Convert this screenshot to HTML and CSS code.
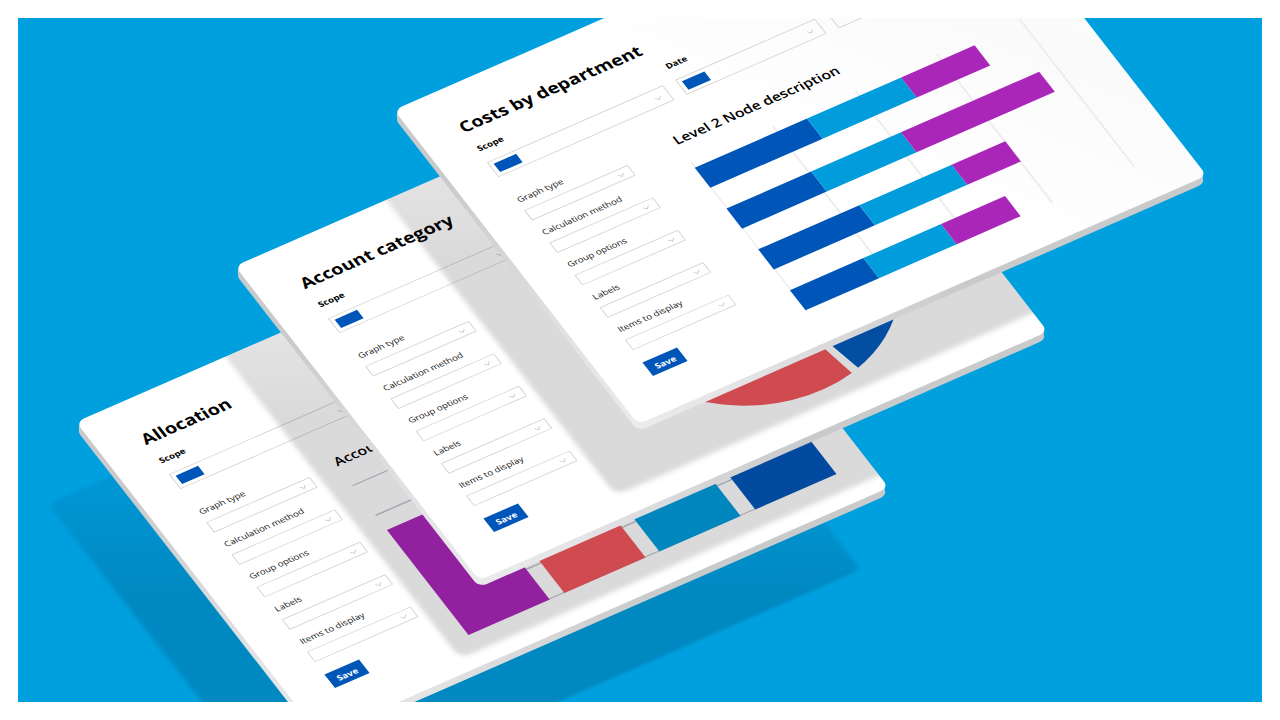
FILE: index.html
```html
<!DOCTYPE html>
<html lang="en">
<head>
    <meta charset="UTF-8">
    <meta name="viewport" content="width=device-width, initial-scale=1.0">
    <title>Reports</title>
    <link rel="stylesheet" href="styles.css">
</head>
<body>
    <main class="scene">
        <div class="ground"></div>

        <section class="board board-back">
            <div class="face">
                <h1>Allocation</h1>
                <div class="filters">
                    <div class="filter">
                        <label for="scope3">Scope</label>
                        <div class="select big"><select id="scope3"></select><span class="chip"></span></div>
                    </div>
                </div>
                <div class="content">
                    <form>
                        <label for="type3">Graph type</label>
                        <div class="select"><select id="type3"></select></div>
                        <label for="method3">Calculation method</label>
                        <div class="select"><select id="method3"></select></div>
                        <label for="group3">Group options</label>
                        <div class="select"><select id="group3"></select></div>
                        <label for="labels3">Labels</label>
                        <div class="select"><select id="labels3"></select></div>
                        <label for="items3">Items to display</label>
                        <div class="select"><select id="items3"></select></div>
                        <button type="button">Save</button>
                    </form>
                    <div class="chart">
                        <h2>Account</h2>
                        <div class="columns">
                            <div class="purple" style="height: 162px"></div>
                            <div class="red" style="height: 110px"></div>
                            <div class="sky" style="height: 90px"></div>
                            <div class="blue" style="height: 120px"></div>
                        </div>
                    </div>
                </div>
                <div class="shade"></div>
            </div>
        </section>

        <section class="board board-middle">
            <div class="face">
                <h1>Account category</h1>
                <div class="filters">
                    <div class="filter">
                        <label for="scope2">Scope</label>
                        <div class="select big"><select id="scope2"></select><span class="chip"></span></div>
                    </div>
                </div>
                <div class="content">
                    <form>
                        <label for="type2">Graph type</label>
                        <div class="select"><select id="type2"></select></div>
                        <label for="method2">Calculation method</label>
                        <div class="select"><select id="method2"></select></div>
                        <label for="group2">Group options</label>
                        <div class="select"><select id="group2"></select></div>
                        <label for="labels2">Labels</label>
                        <div class="select"><select id="labels2"></select></div>
                        <label for="items2">Items to display</label>
                        <div class="select"><select id="items2"></select></div>
                        <button type="button">Save</button>
                    </form>
                    <svg class="pie" width="310" height="156" viewBox="0 0 310 156">
                        <path class="pie-red" d="M166 0 L192 151 A155 155 0 0 1 0 0 Z"/>
                        <path class="pie-blue" d="M171 0 L201 148 A155 155 0 0 0 310 0 Z"/>
                    </svg>
                </div>
                <div class="shade"></div>
            </div>
        </section>

        <section class="board board-front">
            <div class="face">
                <h1>Costs by department</h1>
                <div class="filters">
                    <div class="filter">
                        <label for="scope1">Scope</label>
                        <div class="select big"><select id="scope1"></select><span class="chip"></span></div>
                    </div>
                    <div class="filter">
                        <label for="date1">Date</label>
                        <div class="select big"><select id="date1"></select><span class="chip"></span></div>
                    </div>
                    <div class="filter">
                        <div class="select big"><select aria-label="Filter"></select></div>
                    </div>
                </div>
                <div class="content">
                    <form>
                        <label for="type1">Graph type</label>
                        <div class="select"><select id="type1"></select></div>
                        <label for="method1">Calculation method</label>
                        <div class="select"><select id="method1"></select></div>
                        <label for="group1">Group options</label>
                        <div class="select"><select id="group1"></select></div>
                        <label for="labels1">Labels</label>
                        <div class="select"><select id="labels1"></select></div>
                        <label for="items1">Items to display</label>
                        <div class="select"><select id="items1"></select></div>
                        <button type="button">Save</button>
                    </form>
                    <div class="chart">
                        <h2>Level 2 Node description</h2>
                        <div class="rows">
                            <div class="row">
                                <div class="blue" style="width: 130px"></div>
                                <div class="sky" style="width: 109px"></div>
                                <div class="purple" style="width: 85px"></div>
                            </div>
                            <div class="row">
                                <div class="blue" style="width: 98px"></div>
                                <div class="sky" style="width: 104px"></div>
                                <div class="purple" style="width: 160px"></div>
                            </div>
                            <div class="row">
                                <div class="blue" style="width: 117px"></div>
                                <div class="sky" style="width: 107px"></div>
                                <div class="purple" style="width: 62px"></div>
                            </div>
                            <div class="row">
                                <div class="blue" style="width: 85px"></div>
                                <div class="sky" style="width: 90px"></div>
                                <div class="purple" style="width: 74px"></div>
                            </div>
                        </div>
                    </div>
                </div>
            </div>
        </section>
    </main>
</body>
</html>
```
FILE: styles.css
```css
* {
    box-sizing: border-box;
}
body {
    margin: 0;
    padding: 18px;
    height: 100vh;
    background-color: #fff;
    font-family: "Open Sans", "Noto Sans", sans-serif;
    color: #000;
}
.scene {
    position: relative;
    height: 100%;
    overflow: hidden;
    background-color: #009fde;
}

/* boards lie on one tilted plane */
.board,
.ground {
    position: absolute;
    width: 658px;
    height: 485px;
    border-radius: 9px;
    transform-origin: 0 0;
    transform: scaleY(0.75) rotate(-30.25deg);
}
.board-front {
    left: calc(50% - 246px);
    top: 92px;
}
.board-middle {
    left: calc(50% - 405px);
    top: 248px;
}
.board-back {
    left: calc(50% - 564px);
    top: 404px;
}
.ground {
    left: calc(50% - 592px);
    top: 486px;
    background: linear-gradient(210deg, #0095d3 42%, #0089c1 60%);
    filter: blur(2px);
}

/* thickness of the board */
.board::before,
.board::after {
    content: "";
    position: absolute;
    z-index: -1;
    left: -5px;
    top: 8px;
    width: 100%;
    height: 100%;
    border-radius: 9px;
    background: radial-gradient(circle at 0 100%, #ebebed 0, #e4e4e6 120px, #c9cacc 380px);
}
.board::after {
    left: -3px;
    top: 4px;
}
.face {
    position: relative;
    width: 100%;
    height: 100%;
    padding: 41px 45px 0;
    border-radius: 9px;
    overflow: hidden;
    background: #fff;
}
.board-front .face {
    background: linear-gradient(60deg, #fff 50%, #fafafb 80%, #fff);
}

h1 {
    margin: 0 0 10px;
    font-size: 20px;
    line-height: 28px;
    font-weight: 700;
}
h2 {
    margin: 8px 0 0;
    font-size: 16px;
    line-height: 22px;
    font-weight: 600;
}
.filters {
    display: flex;
    align-items: flex-end;
    gap: 14px;
}
.filter {
    width: 162px;
}
.filter:first-child {
    width: 204px;
}
label {
    display: block;
    padding-left: 1px;
    font-size: 10px;
    line-height: 16px;
}
.filter label {
    margin-bottom: 12px;
    font-weight: 700;
}
.select {
    position: relative;
    height: 16px;
}
.select.big {
    height: 23px;
}
select {
    display: block;
    width: 100%;
    height: 100%;
    margin: 0;
    padding: 0;
    appearance: none;
    border: 1px solid #d2d2d4;
    border-radius: 1px;
    background: transparent;
}
.select::after {
    content: "";
    position: absolute;
    right: 10px;
    top: 50%;
    width: 4px;
    height: 4px;
    margin-top: -3px;
    border: solid #c8c8cc;
    border-width: 0 1px 1px 0;
    transform: rotate(45deg);
}
.chip {
    position: absolute;
    left: 5px;
    top: 5px;
    width: 26px;
    height: 13px;
    background-color: #0056b8;
}
.content {
    display: flex;
    gap: 56px;
    margin-top: 28px;
}
form {
    width: 120px;
    flex-shrink: 0;
}
form label {
    margin-bottom: 7px;
    color: #222;
}
form .select {
    margin-bottom: 11px;
}
button {
    display: block;
    width: 40px;
    height: 21px;
    margin-top: 19px;
    padding: 0;
    border: none;
    background-color: #0056b8;
    color: #fff;
    font-family: inherit;
    font-size: 10px;
    line-height: 20px;
    font-weight: 700;
}

.blue {
    background-color: #0056b8;
}
.sky {
    background-color: #009cdc;
}
.purple {
    background-color: #aa26b8;
}
.red {
    background-color: #f2575c;
}
.rows {
    display: flex;
    flex-direction: column;
    gap: 32px;
    width: 382px;
    margin-top: 22px;
    padding: 8px 0 1px;
    background: repeating-linear-gradient(90deg, #ececee 0 1px, transparent 2px 94px, #ececee 95px);
}
.row {
    display: flex;
    height: 31px;
}
.board-back .content {
    gap: 31px;
}
.columns {
    display: flex;
    justify-content: space-between;
    align-items: flex-end;
    width: 426px;
    height: 231px;
    margin-top: 24px;
    background: repeating-linear-gradient(#c4c4ce 0 1px, transparent 2px 45px, #c4c4ce 46px);
}
.columns div {
    width: 94px;
}
.pie {
    margin: 125px 0 0 48px;
    flex-shrink: 0;
}
.pie-red {
    fill: #f2575c;
}
.pie-blue {
    fill: #005abc;
}

/* shadow of the board above */
.shade {
    position: absolute;
    left: 175px;
    top: -20px;
    right: -20px;
    bottom: 29px;
    border-radius: 12px;
    background: linear-gradient(210deg, rgba(4, 4, 12, 0.09) 28%, rgba(4, 4, 12, 0.15) 52%);
    filter: blur(3px);
    pointer-events: none;
}
.board-back .shade {
    left: 173px;
    bottom: 19px;
}
```
